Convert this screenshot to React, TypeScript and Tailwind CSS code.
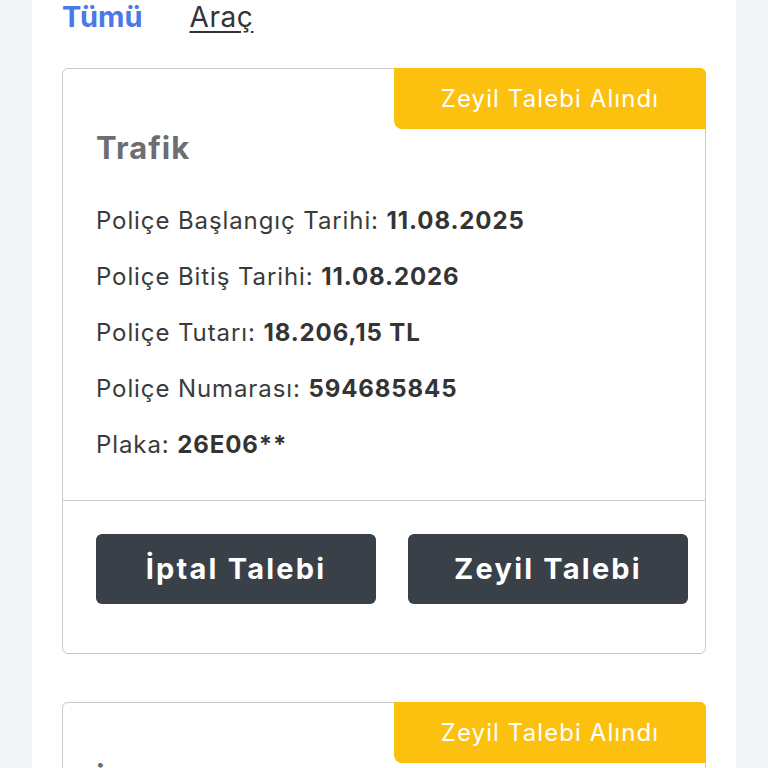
import React from "react";

const rows = [
  { label: "Poliçe Başlangıç Tarihi:", value: "11.08.2025" },
  { label: "Poliçe Bitiş Tarihi:", value: "11.08.2026" },
  { label: "Poliçe Tutarı:", value: "18.206,15 TL" },
  { label: "Poliçe Numarası:", value: "594685845" },
  { label: "Plaka:", value: "26E06**" },
];

function PolicyCard({ title, rowsData }: { title: string; rowsData: typeof rows }) {
  return (
    <div className="relative rounded-md border border-[#c9c9c9] bg-white">
      {/* Status badge */}
      <div className="absolute -top-px -right-px flex h-[61px] w-[312px] items-center justify-center rounded-tr-md rounded-bl-lg bg-[#fcc10e] text-[24px] tracking-[1.1px] text-white">
        Zeyil Talebi Alındı
      </div>

      <div className="px-[33px] pt-[61px] pb-[27px]">
        <h2 className="text-[31px] font-bold leading-[36px] tracking-[1px] text-[#6c6e72]">{title}</h2>
        <div className="mt-[27px] flex flex-col">
          {rowsData.map((r) => (
            <p key={r.label} className="text-[24px] leading-[56px] tracking-[0.9px] text-[#3b3b3b]">
              {r.label} <span className="font-bold text-[#343434]">{r.value}</span>
            </p>
          ))}
        </div>
      </div>

      <div className="border-t border-[#c9c9c9]" />

      <div className="grid grid-cols-2 gap-[32px] pt-[33px] pr-[17px] pb-[49px] pl-[33px]">
        <button className="h-[70px] rounded-md bg-[#394048] text-[29px] font-bold tracking-[2.2px] text-white">
          İptal Talebi
        </button>
        <button className="h-[70px] rounded-md bg-[#394048] text-[29px] font-bold tracking-[2.2px] text-white">
          Zeyil Talebi
        </button>
      </div>
    </div>
  );
}

export default function App() {
  return (
    <div className="min-h-screen bg-[#f4f5f7] font-['Inter',sans-serif]">
      <div className="ml-[32px] w-[704px] min-h-screen bg-white px-[30px]">
        {/* Tabs */}
        <div className="flex h-[34px] items-center gap-[47px]">
          <button className="text-[29px] font-bold text-[#4a78e6]">Tümü</button>
          <button className="text-[28px] tracking-[0.6px] text-[#333] underline underline-offset-4">Araç</button>
        </div>

        <div className="mt-[34px] flex flex-col gap-[48px] pb-10">
          <PolicyCard title="Trafik" rowsData={rows} />
          <PolicyCard title="İMM" rowsData={rows} />
        </div>
      </div>
    </div>
  );
}
